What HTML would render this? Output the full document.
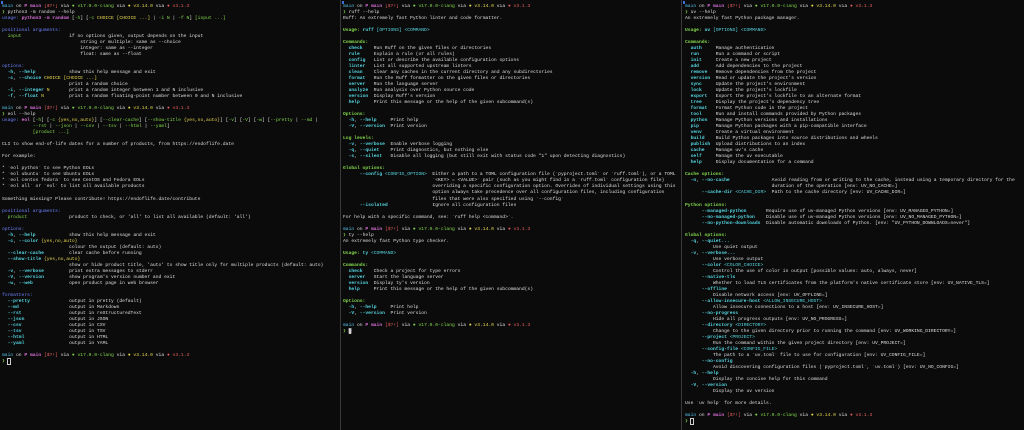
<!DOCTYPE html>
<html><head><meta charset="utf-8"><style>
html,body{margin:0;padding:0;background:#0b0b0b;width:1024px;height:430px;overflow:hidden}
.p{position:absolute;top:4px;height:426px;overflow:hidden;font-family:"Liberation Mono","DejaVu Sans Mono",monospace;font-size:4.67px;line-height:6.02px;color:#dedede;white-space:pre;margin:0}
.div{position:absolute;top:0;width:1px;height:430px;background:#3a3a3a}
.mk{position:absolute;width:2px;height:3px;background:#3f6fd8}
.c{color:#55d6e2;font-weight:bold}.cn{color:#55d6e2}
.g{color:#82d64c;font-weight:bold}.gn{color:#82d64c}
.b{color:#6f83ff}.m{color:#d86ed8;font-weight:bold}.y{color:#e8d84e}.r{color:#e65e5e}
.pc{color:#52bee6}
.cur{background:#d0d0d0;color:#d0d0d0}
.curo{outline:0.6px solid #cfcfcf}
</style></head><body>
<div class="div" style="left:340px"></div>
<div class="div" style="left:681px"></div>
<div class="mk" style="left:1px;top:1px"></div>
<div class="mk" style="left:342px;top:1px"></div>
<div class="mk" style="left:683px;top:1px"></div>
<pre class="p" style="left:2px;width:337px"><span class="pc">main</span> on <span class="m">P main</span> <span class="r">[$?⇡]</span> via <span class="gn">● v17.0.0-clang</span> via <span class="y">● v3.14.0</span> via <span class="r">● v3.1.3</span>
<span class="gn">❯</span> python3 -m random --help
<span class="b">usage: </span><span class="m">python3 -m random</span> [<span class="gn">-h</span>] [<span class="gn">-c</span> <span class="y">CHOICE [CHOICE ...]</span> | <span class="gn">-i N</span> | <span class="gn">-f N</span>] <span class="gn">[input ...]</span>

<span class="b">positional arguments:</span>
  <span class="gn">input</span>                 if no options given, output depends on the input
                            string or multiple: same as --choice
                            integer: same as --integer
                            float: same as --float

<span class="b">options:</span>
  <span class="c">-h</span>, <span class="c">--help</span>            show this help message and exit
  <span class="c">-c</span>, <span class="c">--choice</span> <span class="y">CHOICE [CHOICE ...]</span>
                        print a random choice
  <span class="c">-i</span>, <span class="c">--integer</span> <span class="y">N</span>       print a random integer between 1 and N inclusive
  <span class="c">-f</span>, <span class="c">--float</span> <span class="y">N</span>         print a random floating-point number between 0 and N inclusive

<span class="pc">main</span> on <span class="m">P main</span> <span class="r">[$?⇡]</span> via <span class="gn">● v17.0.0-clang</span> via <span class="y">● v3.14.0</span> via <span class="r">● v3.1.3</span>
<span class="gn">❯</span> eol --help
<span class="b">usage: </span><span class="m">eol</span> [<span class="gn">-h</span>] [<span class="gn">-c</span> <span class="y">{yes,no,auto}</span>] [<span class="gn">--clear-cache</span>] [<span class="gn">--show-title</span> <span class="y">{yes,no,auto}</span>] [<span class="gn">-v</span>] [<span class="gn">-V</span>] [<span class="gn">-w</span>] [<span class="gn">--pretty</span> | <span class="gn">--md</span> |
           <span class="gn">--rst</span> | <span class="gn">--json</span> | <span class="gn">--csv</span> | <span class="gn">--tsv</span> | <span class="gn">--html</span> | <span class="gn">--yaml</span>]
           <span class="gn">[product ...]</span>

CLI to show end-of-life dates for a number of products, from https://endoflife.date

For example:

* `eol python` to see Python EOLs
* `eol ubuntu` to see Ubuntu EOLs
* `eol centos fedora` to see CentOS and Fedora EOLs
* `eol all` or `eol` to list all available products

Something missing? Please contribute! https://endoflife.date/contribute

<span class="b">positional arguments:</span>
  <span class="gn">product</span>               product to check, or 'all' to list all available (default: 'all')

<span class="b">options:</span>
  <span class="c">-h</span>, <span class="c">--help</span>            show this help message and exit
  <span class="c">-c</span>, <span class="c">--color</span> <span class="y">{yes,no,auto}</span>
                        colour the output (default: auto)
  <span class="c">--clear-cache</span>         clear cache before running
  <span class="c">--show-title</span> <span class="y">{yes,no,auto}</span>
                        show or hide product title, 'auto' to show title only for multiple products (default: auto)
  <span class="c">-v</span>, <span class="c">--verbose</span>         print extra messages to stderr
  <span class="c">-V</span>, <span class="c">--version</span>         show program's version number and exit
  <span class="c">-w</span>, <span class="c">--web</span>             open product page in web browser

<span class="b">formatters:</span>
  <span class="c">--pretty</span>              output in pretty (default)
  <span class="c">--md</span>                  output in Markdown
  <span class="c">--rst</span>                 output in reStructuredText
  <span class="c">--json</span>                output in JSON
  <span class="c">--csv</span>                 output in CSV
  <span class="c">--tsv</span>                 output in TSV
  <span class="c">--html</span>                output in HTML
  <span class="c">--yaml</span>                output in YAML

<span class="pc">main</span> on <span class="m">P main</span> <span class="r">[$?⇡]</span> via <span class="gn">● v17.0.0-clang</span> via <span class="y">● v3.14.0</span> via <span class="r">● v3.1.3</span>
<span class="gn">❯</span> <span class="curo"> </span></pre>
<pre class="p" style="left:343px;width:337px"><span class="pc">main</span> on <span class="m">P main</span> <span class="r">[$?⇡]</span> via <span class="gn">● v17.0.0-clang</span> via <span class="y">● v3.14.0</span> via <span class="r">● v3.1.3</span>
<span class="gn">❯</span> ruff --help
Ruff: An extremely fast Python linter and code formatter.

<span class="g">Usage:</span> <span class="c">ruff</span> <span class="cn">[OPTIONS] &lt;COMMAND&gt;</span>

<span class="g">Commands:</span>
  <span class="c">check</span>    Run Ruff on the given files or directories
  <span class="c">rule</span>     Explain a rule (or all rules)
  <span class="c">config</span>   List or describe the available configuration options
  <span class="c">linter</span>   List all supported upstream linters
  <span class="c">clean</span>    Clear any caches in the current directory and any subdirectories
  <span class="c">format</span>   Run the Ruff formatter on the given files or directories
  <span class="c">server</span>   Run the language server
  <span class="c">analyze</span>  Run analysis over Python source code
  <span class="c">version</span>  Display Ruff's version
  <span class="c">help</span>     Print this message or the help of the given subcommand(s)

<span class="g">Options:</span>
  <span class="c">-h</span>, <span class="c">--help</span>     Print help
  <span class="c">-V</span>, <span class="c">--version</span>  Print version

<span class="g">Log levels:</span>
  <span class="c">-v</span>, <span class="c">--verbose</span>  Enable verbose logging
  <span class="c">-q</span>, <span class="c">--quiet</span>    Print diagnostics, but nothing else
  <span class="c">-s</span>, <span class="c">--silent</span>   Disable all logging (but still exit with status code "1" upon detecting diagnostics)

<span class="g">Global options:</span>
      <span class="c">--config</span> <span class="cn">&lt;CONFIG_OPTION&gt;</span>  Either a path to a TOML configuration file (`pyproject.toml` or `ruff.toml`), or a TOML
                                `&lt;KEY&gt; = &lt;VALUE&gt;` pair (such as you might find in a `ruff.toml` configuration file)
                                overriding a specific configuration option. Overrides of individual settings using this
                                option always take precedence over all configuration files, including configuration
                                files that were also specified using `--config`
      <span class="c">--isolated</span>                Ignore all configuration files

For help with a specific command, see: `ruff help &lt;command&gt;`.

<span class="pc">main</span> on <span class="m">P main</span> <span class="r">[$?⇡]</span> via <span class="gn">● v17.0.0-clang</span> via <span class="y">● v3.14.0</span> via <span class="r">● v3.1.3</span>
<span class="gn">❯</span> ty --help
An extremely fast Python type checker.

<span class="g">Usage:</span> <span class="c">ty</span> <span class="cn">&lt;COMMAND&gt;</span>

<span class="g">Commands:</span>
  <span class="c">check</span>    Check a project for type errors
  <span class="c">server</span>   Start the language server
  <span class="c">version</span>  Display ty's version
  <span class="c">help</span>     Print this message or the help of the given subcommand(s)

<span class="g">Options:</span>
  <span class="c">-h</span>, <span class="c">--help</span>     Print help
  <span class="c">-V</span>, <span class="c">--version</span>  Print version

<span class="pc">main</span> on <span class="m">P main</span> <span class="r">[$?⇡]</span> via <span class="gn">● v17.0.0-clang</span> via <span class="y">● v3.14.0</span> via <span class="r">● v3.1.3</span>
<span class="gn">❯</span> <span class="cur">█</span></pre>
<pre class="p" style="left:685px;width:339px"><span class="pc">main</span> on <span class="m">P main</span> <span class="r">[$?⇡]</span> via <span class="gn">● v17.0.0-clang</span> via <span class="y">● v3.14.0</span> via <span class="r">● v3.1.3</span>
<span class="gn">❯</span> uv --help
An extremely fast Python package manager.

<span class="g">Usage:</span> <span class="c">uv</span> <span class="cn">[OPTIONS] &lt;COMMAND&gt;</span>

<span class="g">Commands:</span>
  <span class="c">auth</span>     Manage authentication
  <span class="c">run</span>      Run a command or script
  <span class="c">init</span>     Create a new project
  <span class="c">add</span>      Add dependencies to the project
  <span class="c">remove</span>   Remove dependencies from the project
  <span class="c">version</span>  Read or update the project's version
  <span class="c">sync</span>     Update the project's environment
  <span class="c">lock</span>     Update the project's lockfile
  <span class="c">export</span>   Export the project's lockfile to an alternate format
  <span class="c">tree</span>     Display the project's dependency tree
  <span class="c">format</span>   Format Python code in the project
  <span class="c">tool</span>     Run and install commands provided by Python packages
  <span class="c">python</span>   Manage Python versions and installations
  <span class="c">pip</span>      Manage Python packages with a pip-compatible interface
  <span class="c">venv</span>     Create a virtual environment
  <span class="c">build</span>    Build Python packages into source distributions and wheels
  <span class="c">publish</span>  Upload distributions to an index
  <span class="c">cache</span>    Manage uv's cache
  <span class="c">self</span>     Manage the uv executable
  <span class="c">help</span>     Display documentation for a command

<span class="g">Cache options:</span>
  <span class="c">-n</span>, <span class="c">--no-cache</span>               Avoid reading from or writing to the cache, instead using a temporary directory for the
                               duration of the operation [env: UV_NO_CACHE=]
      <span class="c">--cache-dir</span> <span class="cn">&lt;CACHE_DIR&gt;</span>  Path to the cache directory [env: UV_CACHE_DIR=]

<span class="g">Python options:</span>
      <span class="c">--managed-python</span>       Require use of uv-managed Python versions [env: UV_MANAGED_PYTHON=]
      <span class="c">--no-managed-python</span>    Disable use of uv-managed Python versions [env: UV_NO_MANAGED_PYTHON=]
      <span class="c">--no-python-downloads</span>  Disable automatic downloads of Python. [env: "UV_PYTHON_DOWNLOADS=never"]

<span class="g">Global options:</span>
  <span class="c">-q</span>, <span class="c">--quiet...</span>
          Use quiet output
  <span class="c">-v</span>, <span class="c">--verbose...</span>
          Use verbose output
      <span class="c">--color</span> <span class="cn">&lt;COLOR_CHOICE&gt;</span>
          Control the use of color in output [possible values: auto, always, never]
      <span class="c">--native-tls</span>
          Whether to load TLS certificates from the platform's native certificate store [env: UV_NATIVE_TLS=]
      <span class="c">--offline</span>
          Disable network access [env: UV_OFFLINE=]
      <span class="c">--allow-insecure-host</span> <span class="cn">&lt;ALLOW_INSECURE_HOST&gt;</span>
          Allow insecure connections to a host [env: UV_INSECURE_HOST=]
      <span class="c">--no-progress</span>
          Hide all progress outputs [env: UV_NO_PROGRESS=]
      <span class="c">--directory</span> <span class="cn">&lt;DIRECTORY&gt;</span>
          Change to the given directory prior to running the command [env: UV_WORKING_DIRECTORY=]
      <span class="c">--project</span> <span class="cn">&lt;PROJECT&gt;</span>
          Run the command within the given project directory [env: UV_PROJECT=]
      <span class="c">--config-file</span> <span class="cn">&lt;CONFIG_FILE&gt;</span>
          The path to a `uv.toml` file to use for configuration [env: UV_CONFIG_FILE=]
      <span class="c">--no-config</span>
          Avoid discovering configuration files (`pyproject.toml`, `uv.toml`) [env: UV_NO_CONFIG=]
  <span class="c">-h</span>, <span class="c">--help</span>
          Display the concise help for this command
  <span class="c">-V</span>, <span class="c">--version</span>
          Display the uv version

Use `uv help` for more details.

<span class="pc">main</span> on <span class="m">P main</span> <span class="r">[$?⇡]</span> via <span class="gn">● v17.0.0-clang</span> via <span class="y">● v3.14.0</span> via <span class="r">● v3.1.3</span>
<span class="gn">❯</span> <span class="curo"> </span></pre>
</body></html>
